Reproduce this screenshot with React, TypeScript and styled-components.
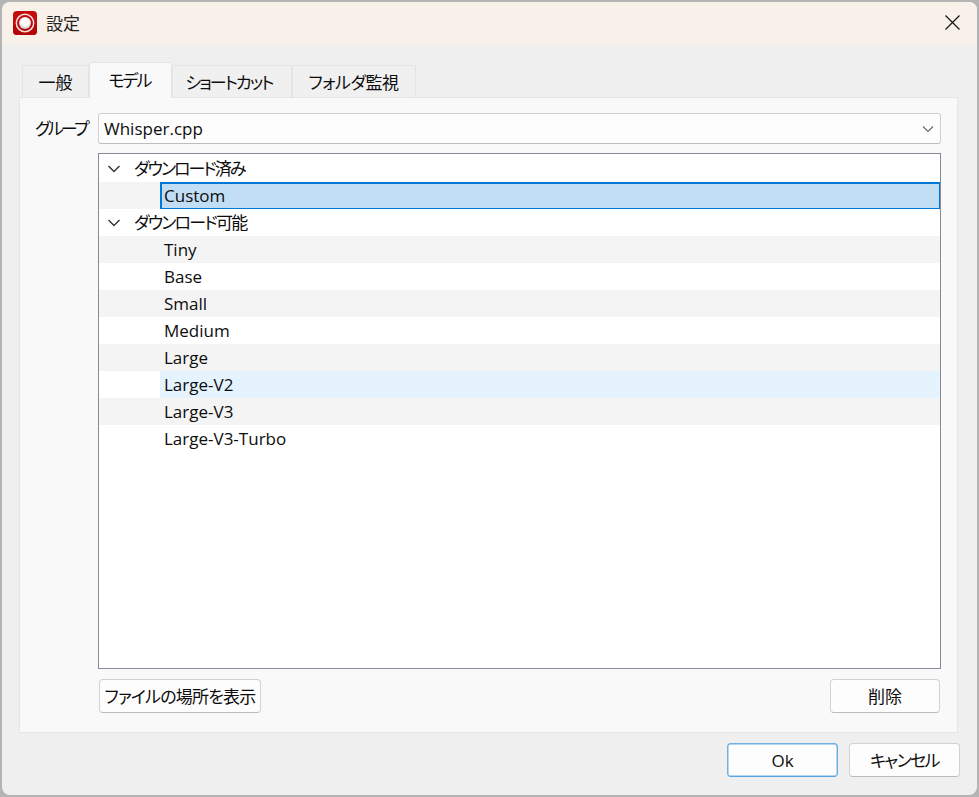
import React from "react";
import styled, { createGlobalStyle } from "styled-components";

const GlobalStyle = createGlobalStyle`
  html, body {
    margin: 0;
    padding: 0;
    width: 979px;
    height: 797px;
    overflow: hidden;
    background: #a9a9a9;
  }
  * {
    box-sizing: border-box;
  }
`;

const Backdrop = styled.div`
  width: 979px;
  height: 797px;
  padding: 2px;
  background: #b4b4b4;
`;

const Dialog = styled.div`
  display: flex;
  flex-direction: column;
  width: 975px;
  height: 793px;
  overflow: hidden;
  border-radius: 8px;
  background: #efefef;
  color: #0c0c0c;
  font-family: "Open Sans", "Noto Sans CJK JP", sans-serif;
  font-size: 17px;
  font-feature-settings: "palt";
  white-space: nowrap;
`;

// Japanese text sits higher and narrower in the original UI font
const Kana = styled.span<{ $tight?: number }>`
  display: block;
  padding-bottom: 2px;
  letter-spacing: ${(p) => p.$tight ?? 0}px;
`;

const TitleBar = styled.div`
  display: flex;
  align-items: center;
  flex: none;
  height: 43px;
  padding: 0 17px 2px 11px;
  background: #f8f1ea;
`;

const Title = styled.div`
  flex: 1;
  margin-left: 9px;
  color: #222222;
`;

const CloseButton = styled.div`
  display: flex;
  width: 15px;
  height: 15px;
  color: #1a1a1a;
`;

const Body = styled.div`
  display: flex;
  flex-direction: column;
  flex: 1;
  padding: 17px;
`;

const TabBar = styled.div`
  display: flex;
  align-items: flex-end;
  height: 36px;
  padding-left: 3px;
  margin-bottom: -1px;
`;

const Tab = styled.div<{ $active?: boolean; $width: number; $nudge?: number }>`
  position: relative;
  display: flex;
  align-items: center;
  justify-content: center;
  width: ${(p) => p.$width}px;
  height: ${(p) => (p.$active ? 36 : 33)}px;
  padding-right: ${(p) => p.$nudge ?? 0}px;
  border: 1px solid #e4e4e4;
  border-bottom: none;
  border-radius: 2px 2px 0 0;
  background: ${(p) => (p.$active ? "#f9f9f9" : "#f0f0f0")};
  z-index: ${(p) => (p.$active ? 2 : 0)};
`;

const Panel = styled.div`
  display: flex;
  flex-direction: column;
  position: relative;
  z-index: 1;
  width: 939px;
  height: 636px;
  padding: 15px 16px 18px 13px;
  border: 1px solid #e6e6e6;
  background: #f9f9f9;
`;

const GroupRow = styled.div`
  display: flex;
  align-items: center;
  height: 31px;
`;

const GroupLabel = styled.div`
  width: 65px;
  padding-left: 2px;
`;

const Combo = styled.div`
  display: flex;
  align-items: center;
  justify-content: space-between;
  flex: 1;
  height: 31px;
  padding: 0 6px 0 5px;
  border: 1px solid #d0d0d0;
  border-bottom-color: #bdbdbd;
  border-radius: 3px;
  background: #fdfdfd;
`;

const TreeRow = styled.div`
  display: flex;
  margin-top: 9px;
`;

const Tree = styled.div`
  flex: 1;
  margin-left: 65px;
  height: 516px;
  padding-top: 1px;
  border: 1px solid #868b98;
  background: #ffffff;
`;

const GroupHeader = styled.div`
  display: flex;
  align-items: center;
  height: 27px;
  padding-left: 8px;
`;

const Chevron = styled.svg`
  width: 14px;
  height: 14px;
  margin-right: 13px;
  color: #333333;
`;

const Item = styled.div<{ $striped?: boolean }>`
  display: flex;
  height: 27px;
  padding-left: 61px;
  background: ${(p) => (p.$striped ? "#f4f4f4" : "transparent")};
`;

const ItemLabel = styled.div<{ $state?: "selected" | "hover" }>`
  display: flex;
  align-items: center;
  flex: 1;
  padding-left: 4px;
  background: ${(p) =>
    p.$state === "selected"
      ? "#c2def5"
      : p.$state === "hover"
        ? "#e5f3ff"
        : "transparent"};
  box-shadow: ${(p) =>
    p.$state === "selected"
      ? "inset 2px 2px 0 #0078d4, inset -1px -1px 0 #0078d4"
      : "none"};
`;

const PanelActions = styled.div`
  display: flex;
  justify-content: space-between;
  margin: 10px 1px 0 66px;
`;

const Button = styled.div<{ $width: number; $accent?: boolean }>`
  display: flex;
  align-items: center;
  justify-content: center;
  width: ${(p) => p.$width}px;
  height: 34px;
  border: 1px solid ${(p) => (p.$accent ? "#6cb0e6" : "#d2d2d2")};
  border-bottom-color: ${(p) => (p.$accent ? "#5aa5e0" : "#bcbcbc")};
  border-radius: 4px;
  background: #fdfdfd;
  box-shadow: ${(p) => (p.$accent ? "inset 0 0 0 0.5px #6cb0e6" : "none")};
`;

const Footer = styled.div`
  display: flex;
  justify-content: flex-end;
  gap: 11px;
  margin-top: 10px;
`;

const AppIcon = () => (
  <svg width="24" height="24" viewBox="0 0 24 24">
    <defs>
      <radialGradient id="ball" cx="0.5" cy="0.4" r="0.6">
        <stop offset="0.5" stopColor="#ffffff" />
        <stop offset="1" stopColor="#c9c3c3" />
      </radialGradient>
    </defs>
    <rect width="24" height="24" rx="4" fill="#c40c0c" />
    <rect y="13" width="24" height="11" rx="4" fill="#b40808" />
    <circle cx="12" cy="12" r="8.7" fill="none" stroke="#f4dcdc" strokeWidth="1.5" />
    <circle cx="12" cy="12" r="6" fill="url(#ball)" />
  </svg>
);

const CloseIcon = () => (
  <svg width="15" height="15" viewBox="0 0 15 15">
    <path d="M0.5 0.5 L14.5 14.5 M14.5 0.5 L0.5 14.5" stroke="currentColor" strokeWidth="1.3" fill="none" />
  </svg>
);

const ChevronIcon = () => (
  <Chevron viewBox="0 0 14 14">
    <path d="M1.5 4 L7 9.5 L12.5 4" stroke="currentColor" strokeWidth="1.4" fill="none" />
  </Chevron>
);

const tabs = [
  { label: "一般", width: 67, tight: 0 },
  { label: "モデル", width: 83, tight: -2, nudge: 2, active: true },
  { label: "ショートカット", width: 120, tight: -1.9, nudge: 6 },
  { label: "フォルダ監視", width: 124, tight: -0.5, nudge: 1 },
];

const available = [
  "Tiny",
  "Base",
  "Small",
  "Medium",
  "Large",
  "Large-V2",
  "Large-V3",
  "Large-V3-Turbo",
];

export default function App() {
  return (
    <Backdrop>
      <GlobalStyle />
      <Dialog>
        <TitleBar>
          <AppIcon />
          <Title>設定</Title>
          <CloseButton>
            <CloseIcon />
          </CloseButton>
        </TitleBar>
        <Body>
          <TabBar>
            {tabs.map((t) => (
              <Tab key={t.label} $active={t.active} $width={t.width} $nudge={t.nudge}>
                <Kana $tight={t.tight}>{t.label}</Kana>
              </Tab>
            ))}
          </TabBar>
          <Panel>
            <GroupRow>
              <GroupLabel>
                <Kana $tight={-2.7}>グループ</Kana>
              </GroupLabel>
              <Combo>
                Whisper.cpp
                <svg width="12" height="12" viewBox="0 0 12 12">
                  <path d="M1 3.5 L6 8.5 L11 3.5" stroke="#666666" strokeWidth="1.1" fill="none" />
                </svg>
              </Combo>
            </GroupRow>
            <TreeRow>
              <Tree>
                <GroupHeader>
                  <ChevronIcon />
                  <Kana $tight={-2}>ダウンロード済み</Kana>
                </GroupHeader>
                <Item $striped>
                  <ItemLabel $state="selected">Custom</ItemLabel>
                </Item>
                <GroupHeader>
                  <ChevronIcon />
                  <Kana $tight={-1.8}>ダウンロード可能</Kana>
                </GroupHeader>
                {available.map((name, i) => (
                  <Item key={name} $striped={i % 2 === 0}>
                    <ItemLabel $state={name === "Large-V2" ? "hover" : undefined}>{name}</ItemLabel>
                  </Item>
                ))}
              </Tree>
            </TreeRow>
            <PanelActions>
              <Button $width={162}>
                <Kana $tight={-0.8}>ファイルの場所を表示</Kana>
              </Button>
              <Button $width={110}>
                <Kana>削除</Kana>
              </Button>
            </PanelActions>
          </Panel>
          <Footer>
            <Button $width={111} $accent>
              Ok
            </Button>
            <Button $width={111}>
              <Kana $tight={-1.6}>キャンセル</Kana>
            </Button>
          </Footer>
        </Body>
      </Dialog>
    </Backdrop>
  );
}
